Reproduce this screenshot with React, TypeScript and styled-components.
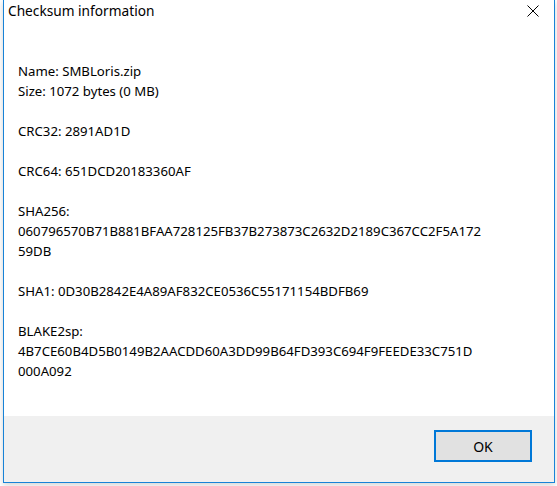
import { FC } from 'react';
import styled, { createGlobalStyle } from 'styled-components';

const GlobalStyle = createGlobalStyle`
  html, body {
    margin: 0;
    padding: 0;
    background: #ffffff;
  }
  body {
    font-family: "Noto Sans", "Liberation Sans", sans-serif;
    width: 557px;
    height: 486px;
    overflow: hidden;
  }
`;

interface Entry {
  lines: string[];
}

const entries: Entry[] = [
  { lines: ['Name: SMBLoris.zip', 'Size: 1072 bytes (0 MB)'] },
  { lines: ['CRC32: 2891AD1D'] },
  { lines: ['CRC64: 651DCD20183360AF'] },
  {
    lines: [
      'SHA256:',
      '060796570B71B881BFAA728125FB37B273873C2632D2189C367CC2F5A172',
      '59DB',
    ],
  },
  { lines: ['SHA1: 0D30B2842E4A89AF832CE0536C55171154BDFB69'] },
  {
    lines: [
      'BLAKE2sp:',
      '4B7CE60B4D5B0149B2AACDD60A3DD99B64FD393C694F9FEEDE33C751D',
      '000A092',
    ],
  },
];

const CloseIcon: FC = () => (
  <svg width="12" height="12" viewBox="0 0 12 12">
    <path d="M0.5 0.5 L11.5 11.5 M11.5 0.5 L0.5 11.5" stroke="#000" strokeWidth="1" fill="none" />
  </svg>
);

const App: FC = () => (
  <>
    <GlobalStyle />
    <Window>
      <TitleBar>
        <Title>Checksum information</Title>
        <CloseButton aria-label="Close">
          <CloseIcon />
        </CloseButton>
      </TitleBar>
      <Content>
        {entries.map((entry, i) => (
          <Block key={i}>
            {entry.lines.map((line, j) => (
              <Line key={j}>{line}</Line>
            ))}
          </Block>
        ))}
      </Content>
      <Footer>
        <OkButton>OK</OkButton>
      </Footer>
    </Window>
  </>
);

export default App;

const Window = styled.div`
  margin-left: 3px;
  width: 552px;
  height: 483px;
  box-sizing: border-box;
  border: 1px solid #1883d7;
  border-top: none;
  background: #ffffff;
  display: flex;
  flex-direction: column;
  box-shadow: 0 2px 6px rgba(0, 0, 0, 0.18);
`;

const TitleBar = styled.div`
  height: 21px;
  display: flex;
  align-items: center;
  justify-content: space-between;
  padding-left: 4px;
`;

const Title = styled.div`
  font-size: 13.7px;
  color: #000;
`;

const CloseButton = styled.div`
  width: 42px;
  height: 21px;
  display: flex;
  align-items: center;
  justify-content: center;
`;

const Content = styled.div`
  flex: 1;
  padding: 40px 14px 0;
  display: flex;
  flex-direction: column;
  gap: 20px;
`;

const Block = styled.div`
  display: flex;
  flex-direction: column;
`;

const Line = styled.div`
  font-size: 13.2px;
  line-height: 20px;
  color: #000;
  white-space: nowrap;
`;

const Footer = styled.div`
  height: 66px;
  box-sizing: border-box;
  background: #f0f0f0;
  display: flex;
  justify-content: flex-end;
  align-items: flex-start;
  padding: 14px 22px 0 0;
`;

const OkButton = styled.button`
  width: 98px;
  height: 32px;
  box-sizing: border-box;
  border: 2px solid #0078d7;
  background: #e1e1e1;
  font-family: "Noto Sans", "Liberation Sans", sans-serif;
  font-size: 14px;
  color: #000;
  padding: 0;
`;
